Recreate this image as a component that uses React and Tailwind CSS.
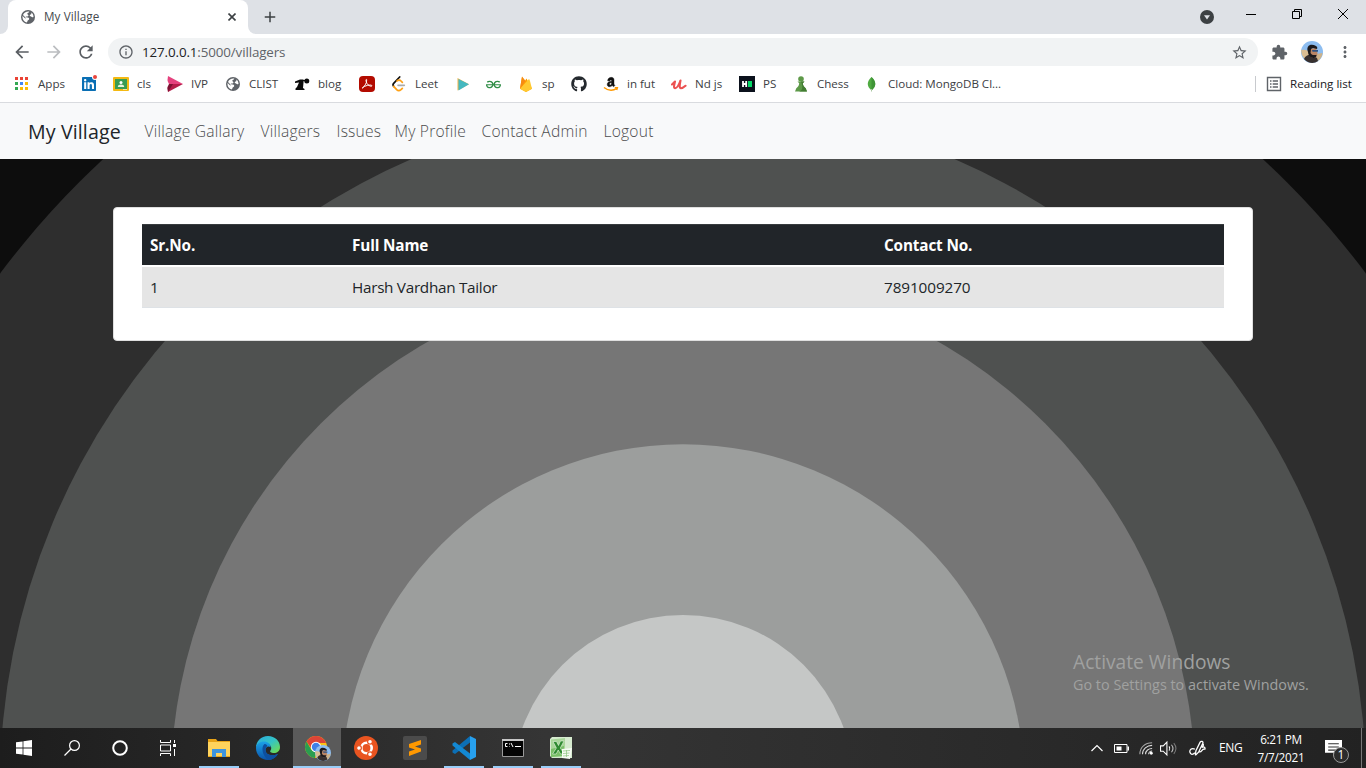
import React from "react";
import { MdPublic, MdRefresh, MdArrowBack, MdArrowForward, MdInfoOutline, MdStarBorder, MdExtension, MdMoreVert, MdAdd } from "react-icons/md";
import { FaLinkedin, FaGithub } from "react-icons/fa";
import { SiGeeksforgeeks } from "react-icons/si";

const Svg = ({ s = 16, vb = "0 0 16 16", className = "", children }) => (
  <svg width={s} height={s} viewBox={vb} fill="none" className={"block shrink-0 " + className}>{children}</svg>
);

const Globe = ({ className = "" }) => (
  <Svg s={14} vb="0 0 14 14" className={className}>
    <circle cx="7" cy="7" r="7" fill="#5f6368" />
    <path d="M8.300 1.600C8.100 3 6.600 2.700 6.300 3.700c-.2.900 1.300.8 1.200 1.700-.2 1.100-1.500.9-2.500 1.100-.6.200 0 .9 1 .9 1.300 0 2.200.3 2.200 1.300 0 1.200-1.200 1.200-1.600 2.100-.3.700-.2 1.400-1 1.600C3.200 11.800 1.500 9.700 1.500 7.200c0-.4 0-.8.1-1.200L4.500 8.800V7.500L2 5c.9-2.200 3.300-3.800 6.300-3.400z" fill="#fff" />
    <path d="M10.300 2.600c1.300.9 2.200 2.500 2.200 4.400-1 .3-1.800.3-2.400-.4-.9-.1-1.600-.7-1.300-1.500.3-.6 1.300-.6 1.600-1.200z" fill="#fff" />
  </Svg>
);

const AppsIcon = () => {
  const c = ["#ea4335", "#ea4335", "#ea4335", "#34a853", "#4285f4", "#fbbc05", "#34a853", "#fbbc05", "#fbbc05"];
  return <Svg>{c.map((f, i) => <rect key={i} x={1 + (i % 3) * 5} y={1 + Math.floor(i / 3) * 5} width="3" height="3" fill={f} />)}</Svg>;
};
const Linkedin = () => (
  <span className="relative -ml-px block size-4"><FaLinkedin size={16} color="#0a6fb4" /><span className="absolute -top-px left-[12px] size-[4px] rounded-full bg-[#e8453c] ring-1 ring-white" /></span>
);
const Classroom = () => (
  <Svg><rect y="1" width="16" height="14" rx="1" fill="#f4b912" /><rect x="2" y="3" width="12" height="10" fill="#3a9c52" /><circle cx="8" cy="6.600" r="1.500" fill="#fff" /><path d="M4.800 11c0-3.200 6.400-3.200 6.400 0z" fill="#e9f3dc" /><path d="M10 13h4v1h-4z" fill="#f7e4a4" /></Svg>
);
const Ivp = () => (
  <Svg><path d="M1 0 16 8H0z" fill="#e5427e" /><path d="M1 16 0 8h16z" fill="#b51d4a" /><path d="M0 8h6L1 16z" fill="#7b1232" /><path d="M0 4v8l2-4z" fill="#fff" /></Svg>
);
const Blog = () => (
  <Svg><path d="M1 5.500 6 3.500h3.500v3L9 12l1.500 1v1H1.500v-1.500L3 11l2-4.500L1 7z" fill="#0b0b0b" /><path d="M8.500 4h3v1.200h-3z" fill="#0b0b0b" /><circle cx="12.800" cy="5" r="2.500" fill="#0b0b0b" /></Svg>
);
const Acrobat = () => (
  <span className="flex size-4 items-center justify-center rounded-sm bg-[#b30b00]">
    <Svg s={12}><path d="M1.500 13.500C4 12 8 7 7.600 2.500 7.500 1 6 2 7 5c1 3.500 4 6 7 6 1.500-.5 0-2-3-1.500-3 .3-6 1.200-8 3-1.400 1-1.500 1-1.500 1z" stroke="#fff" strokeWidth="1.300" /></Svg>
  </span>
);
const Leet = () => (
  <Svg vb="0 0 24 24"><path d="M13 1.500 4 11c-1.300 1.500-1.300 3 0 4.500" stroke="#111" strokeWidth="2.600" strokeLinecap="round" /><path d="M4 15.500l4.500 5c1.800 1.800 4.500 1.800 6.500 0l2-2M9 7.500c2-2 4.500-1.500 6 0l2 2" stroke="#ffa116" strokeWidth="2.600" strokeLinecap="round" /><path d="M10.500 14H20" stroke="#aaa" strokeWidth="2.400" strokeLinecap="round" /></Svg>
);
const Play = () => (
  <Svg><path d="M2.500 2v12.500L14 8.200z" fill="#f1b44a" /><path d="M3.500 3v11.500L14 8.200z" fill="#45b8c0" /></Svg>
);
const Fire = () => (
  <Svg><path d="M2 12.800 4 .8l3 4 1.500-2.200L14 12.800 8 16z" fill="#ffa000" /><path d="M2 12.800 9 5l1.500-1.500c.5-.5 1-.3 1.200.4L14 12.800 8 16z" fill="#ffc931" /><path d="M4 .5 2 12.800 7.500 5z" fill="#f68b13" /></Svg>
);
const Amazon = () => (
  <Svg><path d="M10.600 10.800 9.200 9.600c-1.500 1.800-5 1.500-5-1.200 0-2.300 2-3 4.400-3.100.2-1.600-1.500-1.700-1.900-.3l-2.100-.3C5.200.4 11 .4 11 3.800v3.600c0 1 .4 1.400.9 2zM8.600 6.700c-1.400 0-2.100.5-2.100 1.400 0 1.500 2.100 1.300 2.100-1.400z" fill="#111" stroke="#111" strokeWidth=".4" /><path d="M1 11.500c4 3.200 9 3.300 13 .9M11.800 11.600l2.600.1-.7 2.300" stroke="#f90" strokeWidth="1.400" /></Svg>
);
const Udemy = () => (
  <Svg><path d="M1 8.500 4 5.500C3.500 8 2 12.200 4.200 12.200 6.500 12.200 8 8.500 9.500 4.500 8.800 8 8 12.200 10 12.200c1.800 0 3-1 4.500-2.400" stroke="#ec5252" strokeWidth="2.100" strokeLinecap="round" strokeLinejoin="round" /></Svg>
);
const Hacker = () => (
  <Svg><rect width="16" height="16" fill="#0b111c" /><path d="M4 5v6M7.200 5v6M4 8h3" stroke="#fff" strokeWidth="1.800" /><rect x="9" y="5" width="4" height="6" fill="#05d968" /></Svg>
);
const Mongo = () => (
  <Svg><path d="M7.500 1c5 5 5 9 0 13.500C2.500 10 2.500 6 7.500 1z" fill="#4faa41" /><path d="M7.500 1c5 5 5 9 0 13.500z" fill="#3f9436" /><path d="M7.500 13v2.500" stroke="#a9c7a0" /></Svg>
);
const Chess = () => (
  <Svg><circle cx="8" cy="3" r="2.800" fill="#5d9948" /><path d="M4.500 5.500h7l-1.700 1.700c.2 2.500 1.400 3.600 2.900 5l1.300 3.300H2l1.300-3.300c1.500-1.400 2.700-2.500 2.900-5z" fill="#5d9948" /><path d="M8 5.500h3.500L9.800 7.200c.2 2.500 1.400 3.600 2.900 5l1.300 3.300H6c4-1 4-5 2-10z" fill="#427c32" /></Svg>
);

const bookmarks = [
  [AppsIcon, "Apps", "w-[68px]"],
  [Linkedin, "", "w-[31px]"],
  [Classroom, "cls", "w-[54px]"],
  [Ivp, "IVP", "w-[58px]"],
  [() => <Globe className="ml-px" />, "CLIST", "w-[69px]"],
  [Blog, "blog", "w-[65px]"],
  [Acrobat, "", "w-8"],
  [Leet, "Leet", "w-16"],
  [Play, "", "w-[31px]"],
  [() => <SiGeeksforgeeks size={15} color="#2f8d46" />, "", "w-8"],
  [Fire, "sp", "w-[53px]"],
  [() => <FaGithub size={16} color="#24292e" />, "", "w-8"],
  [Amazon, "in fut", "w-[68px]"],
  [Udemy, "Nd js", "w-[68px]"],
  [Hacker, "PS", "w-[54px]"],
  [Chess, "Chess", "w-[71px]"],
  [Mongo, "Cloud: MongoDB Cl...", "w-[180px]"],
];

const Avatar = ({ s }) => (
  <Svg s={s} vb="0 0 22 22">
    <circle cx="11" cy="11" r="11" fill="#8dbdf0" />
    <path d="M.2 9c4-1 7 0 8 3v8C3 19 0 14 .2 9z" fill="#d9bd93" />
    <path d="M15 13l6.500-1c-.5 4-3 7.500-6.500 9z" fill="#cdb28a" />
    <path d="M3 18c1-3 4-4.500 7-4.500l6 3.500 1 3c-4 3-10 2.500-14-2z" fill="#37302f" />
    <path d="M8 8l7-1 1.500 5c0 3-2 5-4 5s-4.500-3-4.500-9z" fill="#b98564" />
    <path d="M7 11C4.500 4.500 10 2 15 5c1.500 1 1.500 2 1 3l-4-1-2 1-.5 4c1.500 2.500 3 2 6 2 0 2-1.500 3.500-3.500 3C8.500 16 7 13.500 7 11z" fill="#1b191b" />
    <path d="M11 9h6v1.800h-5.500z" fill="#30527f" />
  </Svg>
);

function TabStrip() {
  return (
    <div className="flex h-[34px] bg-[#dee1e6]">
      <div className="w-2 bg-white"><div className="h-full rounded-br-lg bg-[#dee1e6]" /></div>
      <div className="w-60 bg-[#dee1e6]">
        <div className="flex h-full items-center rounded-t-lg bg-white pl-[13px]">
          <Globe />
          <span className="ml-[9px] grow text-[11.700px] tracking-[0.080px] text-[#45494d]">My Village</span>
          <Svg s={8} vb="0 0 8 8" className="mr-3"><path d="M.5.5l7 7M7.500.5l-7 7" stroke="#3c4043" strokeWidth="1.600" /></Svg>
        </div>
      </div>
      <div className="w-2 bg-white"><div className="h-full rounded-bl-lg bg-[#dee1e6]" /></div>
      <MdAdd size={18} color="#3c4043" className="mt-2 ml-[5px]" />
      <div className="flex grow justify-end">
        <Svg s={14} vb="0 0 14 14" className="mt-[10px] mr-8"><circle cx="7" cy="7" r="7" fill="#3c4043" /><path d="M4 5.200h6L7 9.500z" fill="#dee1e6" /></Svg>
        <Svg s={10} vb="0 0 10 10" className="mt-[10px] mr-9"><path d="M0 4.500h10" stroke="#000" /></Svg>
        <Svg s={10} vb="0 0 10 10" className="mt-[9px] mr-9"><path d="M.5 2.500h7v7h-7zM2.500 2.500v-2h7v7h-2" stroke="#000" /></Svg>
        <Svg s={10} vb="0 0 10 10" className="mt-[9px] mr-[18px]"><path d="M0 0l10 10M10 0L0 10" stroke="#000" /></Svg>
      </div>
    </div>
  );
}

function Toolbar() {
  return (
    <div className="flex h-9 items-center bg-white pl-3">
      <MdArrowBack size={20} color="#5a5e63" />
      <MdArrowForward size={20} color="#bbbdc0" className="ml-3" />
      <MdRefresh size={20} color="#5a5e63" className="ml-3" />
      <div className="ml-3 flex h-7 w-[1150px] items-center rounded-full bg-[#f1f3f4] pr-[10px] pl-[10px]">
        <MdInfoOutline size={16} color="#5f6368" />
        <span className="ml-2 grow pt-px text-[13.400px] tracking-[-0.130px] text-[#5f6368]"><span className="text-[#202124]">127.0.0.1</span>:5000/villagers</span>
        <MdStarBorder size={17} color="#5f6368" />
      </div>
      <MdExtension size={17} color="#5f6368" className="ml-[13px]" />
      <div className="ml-[13px]"><Avatar s={22} /></div>
      <MdMoreVert size={18} color="#5f6368" className="ml-[13px]" />
    </div>
  );
}

function Bookmarks() {
  return (
    <div className="flex h-[33px] items-center border-b border-[#d9dbdf] bg-white pb-1 pl-[14px] text-[11.600px] tracking-[-0.020px] text-[#3c4043]">
      {bookmarks.map(([Icon, label, w], i) => (
        <div key={i} className={"flex shrink-0 items-center " + w}>
          <div className="w-6 shrink-0"><Icon /></div>
          <span className="whitespace-nowrap">{label}</span>
        </div>
      ))}
      <div className="grow" />
      <div className="h-4 w-px bg-[#c8cace]" />
      <Svg className="ml-[10px]"><path d="M1.500 1.500h13v13h-13z" stroke="#5f6368" strokeWidth="1.400" /><path d="M4 5h1.500M4 8h1.500M4 11h1.500M6.700 5H12M6.700 8H12M6.700 11H12" stroke="#5f6368" strokeWidth="1.300" /></Svg>
      <span className="mr-[14px] ml-2 w-[62px] whitespace-nowrap text-[#202124]">Reading list</span>
    </div>
  );
}

const links = [
  ["Village Gallary", "w-[116px]"],
  ["Villagers", "w-[76px]"],
  ["Issues", "w-[58px]"],
  ["My Profile", "w-[87px]"],
  ["Contact Admin", "w-[122px]"],
  ["Logout", "w-[60px]"],
];

function Page() {
  return (
    <main className="relative h-[625px] overflow-hidden bg-[#0d0d0d]">
      <svg className="absolute top-14 left-0" width="1366" height="569" viewBox="0 159 1366 569">
        <circle cx="683" cy="785.750" r="853.750" fill="#2e2e2e" />
        <circle cx="683" cy="785.750" r="683" fill="#4f5150" />
        <circle cx="683" cy="785.750" r="512.250" fill="#767676" />
        <circle cx="683" cy="785.750" r="341.500" fill="#9c9e9d" />
        <circle cx="683" cy="785.750" r="170.750" fill="#c5c7c6" />
      </svg>
      <nav className="relative flex h-14 items-center bg-[#f8f9fa] pt-px pl-7">
        <span className="w-[116.500px] text-[19.600px] tracking-[0.120px] text-[#212529]">My Village</span>
        {links.map(([l, w]) => <span key={l} className={"text-[15.600px] font-light tracking-[0.210px] whitespace-nowrap text-[#4c4d4e] " + w}>{l}</span>)}
      </nav>
      <section className="relative mx-auto mt-12 h-[134px] w-[1140px] rounded border border-[#dfdfdf] bg-white px-7 pt-4">
        <table className="w-full table-fixed border-collapse text-[15.300px] tracking-[-0.300px] text-[#212529]">
          <colgroup><col className="w-[202px]" /><col className="w-[532px]" /><col /></colgroup>
          <thead>
            <tr className="h-[41px] border-t border-[#373b3e] bg-[#212529] text-left tracking-[-0.150px] text-white">
              <th className="px-2 pt-[2px] font-bold">Sr.No.</th><th className="px-2 pt-[2px] font-bold">Full Name</th><th className="px-2 pt-[2px] font-bold">Contact No.</th>
            </tr>
          </thead>
          <tbody>
            <tr className="h-[42px] border-t-2 border-b border-t-white border-b-[#dee2e6] bg-[#e5e5e5]">
              <td className="px-2 pt-[2px]">1</td><td className="px-2 pt-[2px]">Harsh Vardhan Tailor</td><td className="px-2 pt-[2px] tracking-[-0.100px]">7891009270</td>
            </tr>
          </tbody>
        </table>
      </section>
      <div className="absolute top-[545px] left-[1073px] whitespace-nowrap text-[#a0a1a0]">
        <div className="text-[19.200px] leading-[27px]">Activate Windows</div>
        <div className="pt-px text-[14.400px] leading-[18px]">Go to Settings to activate Windows.</div>
      </div>
    </main>
  );
}

const Task = ({ w = "w-12", active, open, children }) => (
  <div className={"flex h-10 shrink-0 flex-col items-center " + w + (active ? " bg-[#5a5a5a]" : "")}>
    <div className="flex h-[38px] items-center pt-[2px]">{children}</div>
    <div className={"h-0.5 " + (active ? "w-full bg-[#99cdf8]" : open ? "w-10 bg-[#99cdf8]" : "w-0")} />
  </div>
);

function Taskbar() {
  return (
    <footer className="flex h-10 bg-linear-to-r from-[#1d1d1d] via-[#353535] via-40% to-[#222222] text-white">
      <Task><Svg><path d="M0 2.300 6.600 1.400v6.200H0zM7.400 1.300 16 0v7.600H7.400zM0 8.400h6.600v6.200L0 13.700zM7.400 8.400H16V16l-8.600-1.300z" fill="#fff" /></Svg></Task>
      <Task><Svg><circle cx="10.500" cy="5.500" r="4.900" stroke="#fff" strokeWidth="1.200" /><path d="M7 9 .5 15.500" stroke="#fff" strokeWidth="1.300" /></Svg></Task>
      <Task><Svg><circle cx="8" cy="8" r="6.800" stroke="#fff" strokeWidth="2" /></Svg></Task>
      <Task><Svg><path d="M.5 0v2.500h10V0M.5 16v-2.500h10V16M.5 5h10v6H.5zM14.500 0v3M14.500 9v7" stroke="#fff" /><path d="M13 4h3v3h-3z" fill="#fff" /></Svg></Task>
      <Task w="w-[54px]" open>
        <Svg s={22} vb="0 0 22 22"><path d="M0 2h8l1.500 2H22v16H0z" fill="#e8a317" /><path d="M0 5h22v14H0z" fill="#ffd35c" /><path d="M4 12h14v8h-4v-4H8v4H4z" fill="#3e94dd" /></Svg>
      </Task>
      <Task w="mr-1 w-[43px]">
        <Svg s={24} vb="0 0 24 24">
          <defs><linearGradient id="eg" x1="0" y1="0" x2="1" y2="1"><stop stopColor="#2aa9df" /><stop offset=".5" stopColor="#35c4c4" /><stop offset="1" stopColor="#76e040" /></linearGradient><linearGradient id="eb" x1="0" y1="0" x2="0" y2="1"><stop stopColor="#1ba2e8" /><stop offset="1" stopColor="#0b52a8" /></linearGradient></defs>
          <path d="M0 12C0 5 5 0 12 0c7 0 12 5 12 11 0 4-3 6-6 6-3 0-4.500-1-3.500-2.500C17 11 13 7 9 7c-5 0-9 3-9 5z" fill="url(#eg)" />
          <path d="M0 12c0-4 4-6.500 8-6.500 3.500 0 7 2.500 6.500 6-1.500-2-5-1-5 2.500 0 4 5 7 12.500 4C19 22 16 24 12 24 5 24 0 19 0 12z" fill="url(#eb)" />
          <path d="M8.500 8C5 11 6 19 12 24c4 0 7.500-2 10-6-8 3-12.500 0-12.500-4 0-2 .5-2.800 1.500-3.500C12 9.500 10 8 8.500 8z" fill="#0d4fa0" />
        </Svg>
      </Task>
      <Task active>
        <span className="relative block size-6">
          <Svg s={22} vb="0 0 22 22"><circle cx="11" cy="11" r="11" fill="#fbc116" /><path d="M1.500 5.500A11 11 0 0 1 20.500 5.500L21 7H11l-5 5z" fill="#dc4437" /><path d="M1.500 5.500 6.500 14l4.500 2-1 6A11 11 0 0 1 1.500 5.500z" fill="#2a9d50" /><circle cx="11" cy="11" r="5.200" fill="#fff" /><circle cx="11" cy="11" r="4.200" fill="#3f7fe8" /></Svg>
          <span className="absolute top-[9px] left-[10px]"><Avatar s={16} /></span>
        </span>
      </Task>
      <Task w="w-[50px]">
        <Svg s={24} vb="0 0 24 24"><circle cx="12" cy="12" r="12" fill="#e95420" /><circle cx="12.500" cy="12" r="5.200" stroke="#fff" strokeWidth="2.600" /><g stroke="#e95420" strokeWidth="1.200" fill="#fff"><circle cx="5" cy="12" r="2.400" /><circle cx="16" cy="5.800" r="2.400" /><circle cx="16" cy="18.200" r="2.400" /></g></Svg>
      </Task>
      <Task>
        <Svg s={24} vb="0 0 24 24"><rect width="24" height="24" rx="2" fill="#4b4b4b" /><path d="M18 4v4.500l-6 2 6 2v3L6 20v-4.500l6-2-6-2V8z" fill="#ff9800" /></Svg>
      </Task>
      <Task w="w-[50px]" open>
        <Svg s={24} vb="0 0 24 24"><path d="M18 0v6.500L3 18l-2.500-1.500v-2z" fill="#0c6fb5" /><path d="M18 24v-6.500L3 6 .5 7.500v2z" fill="#1388d2" /><path d="M18 0l6 3v18l-6 3z" fill="#27a0ee" /></Svg>
      </Task>
      <Task open w="w-[47px]">
        <Svg s={22} vb="0 0 22 22"><path d="M.5 2.500h21v17H.5z" fill="#040404" stroke="#999" /><path d="M0 2h22v2H0z" fill="#c7c7c7" /><path d="M5.500 6.500H3.500v3h2M7.500 6.500v1M7.500 9v.5M9 6l2 4M13 9.500h6" stroke="#fff" /></Svg>
      </Task>
      <Task open w="w-[50px]">
        <Svg s={22} vb="0 0 22 22"><path d="M0 2 2 0h20v21H2L0 19z" fill="#d6ebcf" /><path d="M1 2.500 15 1v18L1 20z" fill="#a8d69a" /><path d="M1 12 14 9v10L1 20z" fill="#7abf68" /><path d="M3 4.500h3.500l2 4 2-4.500H14L10.300 11l4 6h-3.700l-2.400-4-2 4H2.500L6.400 11z" fill="#2f8a31" stroke="#e6f5e0" strokeWidth=".6" /><path d="M12 12l10-1-2 11-8-1z" fill="#f6fbf4" /><path d="M13 14l7-.5M13 16.500l6.500-.5M13 19l6-.5M16.500 13v7" stroke="#8cc380" strokeWidth=".7" /></Svg>
      </Task>
      <div className="grow" />
      <div className="flex items-center">
        <Svg s={12} vb="0 0 12 12"><path d="M.5 9 6 3.500 11.500 9" stroke="#fff" strokeWidth="1.200" /></Svg>
        <Svg s={16} className="ml-[11px]"><path d="M.5 4.500h12.500v8H.5z" stroke="#fff" /><path d="M2.500 6.500h5v4h-5zM13.500 6.500H15v4h-1.500z" fill="#fff" /></Svg>
        <Svg s={14} className="ml-[9px]"><g stroke="#ddd" strokeWidth="1.200"><path d="M1 15C1 7 7 2 15 2" opacity=".7" /><path d="M4 15c0-6 5-10 11-10M7.500 15C7.500 11 11 8.500 15 8.500" /><path d="M11 15c0-2 2-3.500 4-3.500" /></g><circle cx="14" cy="14" r="1.700" fill="#fff" /></Svg>
        <Svg s={17} className="ml-[7px]"><path d="M.5 5.500h2.500L6.500 2v12L3 10.500H.5zM8.500 6q1.500 2 0 4" stroke="#fff" /><path d="M10.800 4.500q2.800 3.500 0 7" stroke="#bbb" /><path d="M13 3q4 5 0 10" stroke="#777" /></Svg>
        <Svg s={17} className="ml-3"><path d="M6 14.500 6.500 10 10.500 2c.8-1.500 3.300-.5 2.500 1L9 11.500 6 14.500M5.500 8.500C2 7.500.5 9 .8 11.500c.5 2.500 3 2.500 4.700.5M9.500 11c3 1 2-3 5.500-2.500.5-2-1.500-2.500-3-1.500M13 3.500c1 1 .5 2-.5 3" stroke="#fff" strokeWidth="1.200" /></Svg>
        <span className="ml-[13px] w-[37px] text-[12px] tracking-[-0.350px]">ENG</span>
        <div className="w-[50px] text-center text-[11.800px] leading-[18px] tracking-[-0.350px] whitespace-nowrap"><div className="-mt-px">6:21 PM</div><div className="tracking-[-0.250px]">7/7/2021</div></div>
        <span className="relative ml-[19px] block h-6 w-6">
          <Svg s={17} className="mt-1"><path d="M0 0h16v12h-4.500L8 15.500V12H0z" fill="#fff" /><path d="M3 3.500h10M3 6.500h10M3 9.500h7" stroke="#333" /></Svg>
          <span className="absolute top-[11px] left-[8px] flex size-4 items-center justify-center rounded-full border border-[#999] bg-[#2c2c2c] text-[12px] leading-none">1</span>
        </span>
        <div className="ml-[12px] h-10 w-px bg-[#777]" /><div className="w-1" />
      </div>
    </footer>
  );
}

export default function App() {
  return (
    <div className="h-[768px] w-[1366px] overflow-hidden bg-white font-['Open_Sans','Noto_Sans',sans-serif]">
      <TabStrip />
      <Toolbar />
      <Bookmarks />
      <Page />
      <Taskbar />
    </div>
  );
}
